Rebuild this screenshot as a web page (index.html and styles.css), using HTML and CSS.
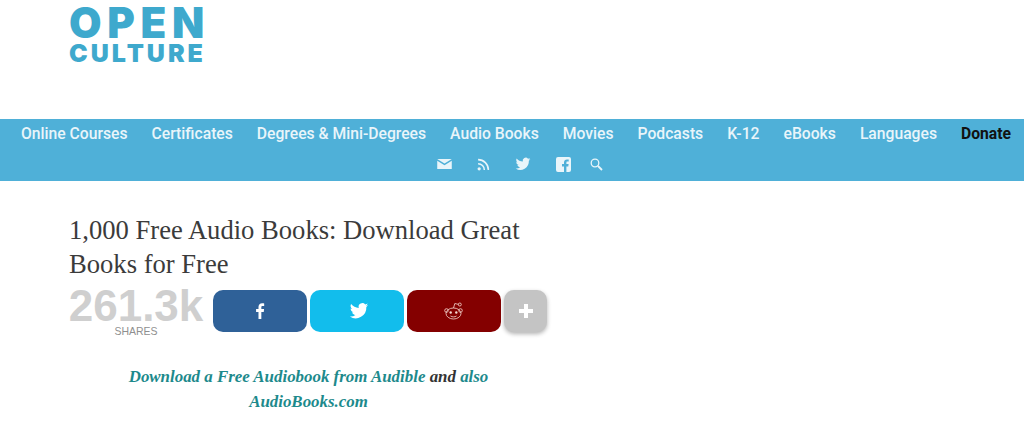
FILE: index.html
```html
<!DOCTYPE html>
<html lang="en">
<head>
    <meta charset="UTF-8">
    <meta name="viewport" content="width=device-width, initial-scale=1.0">
    <title>1,000 Free Audio Books</title>
    <link rel="stylesheet" href="styles.css">
</head>
<body>
    <header class="masthead">
        <a class="logo" href="#">
            <span class="logo-open">OPEN</span>
            <span class="logo-culture">CULTURE</span>
        </a>
    </header>
    <nav class="nav">
        <ul class="nav-links">
            <li><a href="#">Online Courses</a></li>
            <li><a href="#">Certificates</a></li>
            <li><a href="#">Degrees &amp; Mini-Degrees</a></li>
            <li><a href="#">Audio Books</a></li>
            <li><a href="#">Movies</a></li>
            <li><a href="#">Podcasts</a></li>
            <li><a href="#">K-12</a></li>
            <li><a href="#">eBooks</a></li>
            <li><a href="#">Languages</a></li>
            <li><a class="donate" href="#">Donate</a></li>
        </ul>
        <div class="nav-icons">
            <svg class="icon-mail" viewBox="0 0 16 11"><path d="M0 0h16L8 5z"/><path d="M0 2l8 5 8-5v9H0z"/></svg>
            <svg class="icon-rss" viewBox="0 0 12 12"><circle cx="2" cy="10" r="1.5"/><path d="M1 5.2a5.8 5.8 0 0 1 5.8 5.8M1 1.5A9.5 9.5 0 0 1 10.500 11" fill="none" stroke="currentColor" stroke-width="1.400"/></svg>
            <svg class="icon-twitter" viewBox="0 0 24 24"><path d="M23 4.900c-.8.400-1.700.600-2.600.700.900-.6 1.600-1.400 2-2.500-.9.500-1.800.900-2.900 1.100a4.500 4.500 0 0 0-7.800 4.100C8 8.100 4.700 6.300 2.500 3.600c-1.200 2-.6 4.600 1.400 6-.7 0-1.400-.2-2-.6 0 2.200 1.500 4.100 3.600 4.500-.7.200-1.400.2-2 .1.600 1.800 2.300 3.100 4.200 3.100A9.100 9.100 0 0 1 1 18.600 12.800 12.800 0 0 0 20.800 7.200c.9-.6 1.600-1.400 2.200-2.300z"/></svg>
            <svg class="icon-facebook" viewBox="0 0 15 15"><path d="M2 0h11a2 2 0 0 1 2 2v11a2 2 0 0 1-2 2h-2.600V9.400h1.900l.3-2.300h-2.200V5.700c0-.7.200-1.100 1.100-1.100h1.200v-2c-.3 0-1-.1-1.700-.1-1.800 0-3 1.100-3 3v1.600h-2v2.300h2V15H2a2 2 0 0 1-2-2V2a2 2 0 0 1 2-2z"/></svg>
            <svg class="icon-search" viewBox="0 0 13 13"><circle cx="5" cy="5" r="3.800" fill="none" stroke="currentColor" stroke-width="1.300"/><path d="M8 8l4 4" stroke="currentColor" stroke-width="1.800"/></svg>
        </div>
    </nav>
    <main class="post">
        <h1 class="post-title">1,000 Free Audio Books: Download Great Books for Free</h1>
        <div class="share">
            <div class="share-count">
                <span class="share-number">261.3k</span>
                <span class="share-label">SHARES</span>
            </div>
            <a class="share-btn share-fb" href="#">
                <svg width="10" height="16" viewBox="0 0 10 18"><path fill="#fff" d="M6.500 18V10h2.700l.4-3.200H6.500V4.900c0-.9.300-1.500 1.600-1.500h1.600V.6C9.400.5 8.500.4 7.400.4 5 .4 3.300 1.900 3.300 4.600v2.200H.6V10h2.700v8z"/></svg>
            </a>
            <a class="share-btn share-tw" href="#">
                <svg width="20" height="20" viewBox="0 0 24 24"><path fill="#fff" d="M23 4.900c-.8.400-1.700.600-2.600.700.900-.6 1.600-1.400 2-2.500-.9.500-1.800.900-2.900 1.100a4.500 4.500 0 0 0-7.800 4.100C8 8.100 4.700 6.300 2.500 3.600c-1.200 2-.6 4.600 1.400 6-.7 0-1.400-.2-2-.6 0 2.200 1.500 4.100 3.600 4.500-.7.200-1.400.2-2 .1.600 1.800 2.300 3.100 4.200 3.100A9.100 9.100 0 0 1 1 18.600 12.800 12.800 0 0 0 20.800 7.200c.9-.6 1.600-1.400 2.200-2.300z"/></svg>
            </a>
            <a class="share-btn share-rd" href="#">
                <svg width="22" height="20" viewBox="0 0 22 20" fill="none" stroke="#f6d9d2" stroke-width="0.800"><ellipse cx="10.500" cy="12.500" rx="7.500" ry="5.500"/><circle cx="3.500" cy="9.500" r="1.800"/><circle cx="17.500" cy="9.500" r="1.800"/><path d="M10.500 7l1.300-4.500 3.700.9"/><circle cx="16.800" cy="3.500" r="1.500"/><circle cx="7.700" cy="11.500" r="1.200" fill="#f6d9d2" stroke="none"/><circle cx="13.300" cy="11.500" r="1.200" fill="#f6d9d2" stroke="none"/><path d="M7.500 15c1.800 1.200 4.200 1.200 6 0"/></svg>
            </a>
            <a class="share-btn share-more" href="#">
                <svg width="16" height="16" viewBox="0 0 16 16"><path fill="#fff" d="M6 1h4v5h5v4h-5v5H6v-5H1V6h5z"/></svg>
            </a>
        </div>
        <p class="post-links"><a href="#">Download a Free Audiobook from Audible</a> and <a href="#">also AudioBooks.com</a></p>
    </main>
</body>
</html>
```

FILE: styles.css
```css
body {
    margin: 0;
    background-color: #fff;
    font-family: "Liberation Serif", serif;
    overflow: hidden;
}
a {
    color: inherit;
    text-decoration: none;
}
.masthead {
    height: 119px;
    padding-left: 69px;
    box-sizing: border-box;
}
.logo {
    display: inline-flex;
    flex-direction: column;
    color: #3ea9cd;
    font-family: Inter, sans-serif;
    font-weight: 900;
}
.logo-open {
    font-size: 42px;
    line-height: 32px;
    margin-top: 7px;
    letter-spacing: 5.700px;
}
.logo-culture {
    font-size: 25px;
    line-height: 22px;
    margin-top: 3px;
    letter-spacing: 3px;
}
.nav {
    height: 62px;
    background-color: #4fb0d8;
    color: #e9f5fa;
    font-family: Roboto, sans-serif;
    font-size: 15.700px;
    font-weight: 500;
}
.nav-links {
    display: flex;
    justify-content: center;
    gap: 24px;
    margin: 0;
    padding: 6px 0 0 8px;
    list-style: none;
    line-height: 18px;
}
.donate {
    color: #111;
    font-weight: 700;
}
.nav-icons {
    display: flex;
    align-items: center;
    justify-content: center;
    gap: 25px;
    margin-top: 13px;
    padding-left: 16px;
    height: 16px;
}
.nav-icons svg {
    fill: currentColor;
    color: #e9f5fa;
}
.icon-mail { width: 15px; height: 10px; }
.icon-rss { width: 13px; height: 13px; }
.icon-twitter { width: 16px; height: 16px; }
.icon-facebook { width: 15px; height: 15px; }
.icon-search { width: 13px; height: 13px; margin-left: -6px; }
.post {
    width: 479px;
    margin-left: 69px;
}
.post-title {
    margin: 32px 0 0;
    color: #3b3b3b;
    font-size: 26.600px;
    font-weight: 400;
    line-height: 34px;
}
.share {
    display: flex;
    gap: 3px;
    margin-top: 9px;
}
.share-count {
    display: flex;
    flex-direction: column;
    align-items: center;
    width: 134px;
    margin-right: 7px;
    font-family: "Liberation Sans", sans-serif;
}
.share-number {
    color: #cfcfcf;
    font-size: 44px;
    font-weight: 700;
    line-height: 36px;
    margin-top: -2px;
}
.share-label {
    color: #8f8f8f;
    font-size: 10.500px;
    line-height: 12px;
    margin-top: 1px;
}
.share-btn {
    display: flex;
    align-items: center;
    justify-content: center;
    width: 94px;
    height: 42px;
    border-radius: 10px;
}
.share-fb { background-color: #2f6198; }
.share-tw { background-color: #12bdec; }
.share-tw svg { margin-left: 3px; }
.share-rd { background-color: #840000; }
.share-more {
    width: 43px;
    background-color: #c4c4c4;
    box-shadow: 0 2px 4px rgba(0, 0, 0, 0.3);
}
.post-links {
    margin: 27px 0 0;
    color: #333;
    font-size: 16.900px;
    font-style: italic;
    font-weight: 700;
    line-height: 25px;
    text-align: center;
}
.post-links a {
    color: #1d8a8c;
}
```
